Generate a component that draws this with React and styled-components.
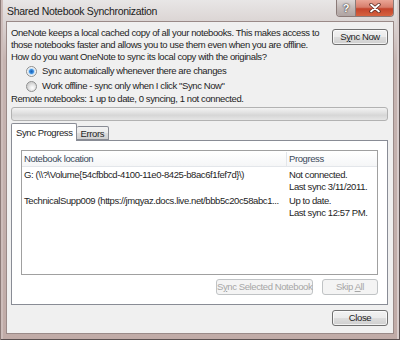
import React from 'react';
import styled, { createGlobalStyle } from 'styled-components';

const GlobalStyle = createGlobalStyle`
	html, body {
		margin: 0;
		padding: 0;
		background: #ffffff;
	}
	body {
		width: 400px;
		height: 340px;
		overflow: hidden;
		font-family: 'Liberation Sans', Arial, sans-serif;
	}
`;

const rows = [
	{
		location: 'G: (\\\\?\\Volume{54cfbbcd-4100-11e0-8425-b8ac6f1fef7d}\\)',
		status: 'Not connected.',
		last: 'Last sync 3/11/2011.',
	},
	{
		location:
			'TechnicalSupp009 (https://jmqyaz.docs.live.net/bbb5c20c58abc1...',
		status: 'Up to date.',
		last: 'Last sync 12:57 PM.',
	},
];

const App = () => {
	return (
		<>
			<GlobalStyle />
			<Window>
				<TitleBar>
					<Title>Shared Notebook Synchronization</Title>
					<CaptionButtons>
						<HelpButton>?</HelpButton>
						<CloseCaption>
							<svg width='12' height='10' viewBox='0 0 12 10'>
								<path
									d='M2 1.5 L10 8.5 M10 1.5 L2 8.5'
									stroke='#5a2a22'
									strokeWidth='3.4'
									strokeLinecap='round'
								/>
								<path
									d='M2 1.5 L10 8.5 M10 1.5 L2 8.5'
									stroke='#ffffff'
									strokeWidth='1.8'
									strokeLinecap='round'
								/>
							</svg>
						</CloseCaption>
					</CaptionButtons>
				</TitleBar>
				<Client>
					<TopRow>
						<Intro>
							OneNote keeps a local cached copy of all your notebooks. This
							makes access to those notebooks faster and allows you to use them
							even when you are offline. How do you want OneNote to sync its
							local copy with the originals?
						</Intro>
						<Button>
							S<u>y</u>nc Now
						</Button>
					</TopRow>
					<RadioGroup>
						<RadioRow>
							<Radio checked />
							<span>Sync automatically whenever there are changes</span>
						</RadioRow>
						<RadioRow>
							<Radio />
							<span>Work offline - sync only when I click "Sync Now"</span>
						</RadioRow>
					</RadioGroup>
					<StatusLine>
						Remote notebooks: 1 up to date, 0 syncing, 1 not connected.
					</StatusLine>
					<ProgressTrack />
					<TabStrip>
						<Tab selected>Sync Progress</Tab>
						<Tab>Errors</Tab>
					</TabStrip>
					<TabPanel>
						<ListBox>
							<ListHeader>
								<HeaderCell>Notebook location</HeaderCell>
								<HeaderCell last>Progress</HeaderCell>
							</ListHeader>
							{rows.map((row, index) => (
								<ListRow key={index}>
									<LocationCell>{row.location}</LocationCell>
									<ProgressCell>
										<div>{row.status}</div>
										<div>{row.last}</div>
									</ProgressCell>
								</ListRow>
							))}
						</ListBox>
						<PanelButtons>
							<Button disabled wide>
								S<u>y</u>nc Selected Notebook
							</Button>
							<Button disabled>
								Skip <u>A</u>ll
							</Button>
						</PanelButtons>
					</TabPanel>
					<Footer>
						<Button>Close</Button>
					</Footer>
				</Client>
			</Window>
		</>
	);
};

const Window = styled.div`
	width: 400px;
	height: 340px;
	box-sizing: border-box;
	display: flex;
	flex-direction: column;
	padding: 0 6px 6px 6px;
	background: linear-gradient(
		to bottom,
		#e8e6e6 0px,
		#dcd6d5 20px,
		#c6b4b1 60px,
		#c0aba7 100%
	);
	box-shadow: inset 1px 0 0 #8c7b78, inset -1px 0 0 #5a5050,
		inset 0 -1px 0 #5a5050, inset -3px 0 0 #d8cccb, inset 3px 0 0 #cdbdba;
`;

const TitleBar = styled.div`
	height: 21px;
	display: flex;
	justify-content: space-between;
	align-items: flex-start;
`;

const Title = styled.div`
	padding: 5px 0 0 1px;
	font-size: 10.5px;
	letter-spacing: -0.3px;
	color: #1c1c1c;
	white-space: nowrap;
`;

const CaptionButtons = styled.div`
	display: flex;
	height: 16px;
	border: 1px solid #8a7a78;
	border-top: none;
	border-radius: 0 0 4px 4px;
	overflow: hidden;
`;

const HelpButton = styled.div`
	width: 18px;
	display: flex;
	align-items: center;
	justify-content: center;
	font-size: 11px;
	font-weight: bold;
	color: #ffffff;
	text-shadow: 0 0 2px #3a3030, 0 0 1px #3a3030;
	background: linear-gradient(to bottom, #dcd6d5, #c2b8b6 50%, #b0a4a2);
	border-right: 1px solid #8a7a78;
`;

const CloseCaption = styled.div`
	width: 37px;
	display: flex;
	align-items: center;
	justify-content: center;
	background: linear-gradient(
		to bottom,
		#eaa596 0%,
		#d77e6c 45%,
		#c4442c 55%,
		#d6623f 100%
	);
`;

const Client = styled.div`
	flex: 1;
	display: flex;
	flex-direction: column;
	background: #f0f0f0;
	border: 1px solid #9a8a88;
	padding: 5px 5px 0 4px;
	font-size: 9.5px;
	letter-spacing: -0.4px;
	line-height: 12px;
	color: #1e1e1e;
`;

const TopRow = styled.div`
	display: flex;
	justify-content: space-between;
	align-items: flex-start;
`;

const Intro = styled.p`
	margin: 0;
	width: 310px;
`;

const Button = styled.button`
	width: ${(props) => (props.wide ? '97px' : '56px')};
	height: 16px;
	padding: 0;
	margin-top: 2px;
	font-family: inherit;
	font-size: 9.5px;
	letter-spacing: -0.4px;
	line-height: 12px;
	color: ${(props) => (props.disabled ? '#a6a6a6' : '#1e1e1e')};
	border: 1px solid ${(props) => (props.disabled ? '#c0c3c5' : '#707070')};
	border-radius: 3px;
	background: ${(props) =>
		props.disabled
			? '#f4f4f4'
			: 'linear-gradient(to bottom, #f2f2f2 0%, #ebebeb 50%, #dddddd 51%, #cfcfcf 100%)'};
	box-shadow: inset 0 0 0 1px
		${(props) => (props.disabled ? '#f4f4f4' : 'rgba(255,255,255,0.7)')};
	white-space: nowrap;

	u {
		text-decoration-thickness: 1px;
		text-underline-offset: 1px;
	}
`;

const RadioGroup = styled.div`
	display: flex;
	flex-direction: column;
	gap: 1px;
	margin: 1px 0 0 15px;
`;

const RadioRow = styled.label`
	height: 14px;
	display: flex;
	align-items: center;
	gap: 5px;
`;

const Radio = styled.span`
	width: 9px;
	height: 9px;
	border-radius: 50%;
	border: 1px solid #8e8f8f;
	background: ${(props) =>
		props.checked
			? 'radial-gradient(circle, #1a5fb4 0px, #3a8ee0 2px, #bfdcf5 3px, #f4f4f4 4px)'
			: 'radial-gradient(circle at 60% 65%, #ffffff 0px, #e6e6e6 3px, #d2d2d2 5px)'};
`;

const StatusLine = styled.div`
	margin-top: 0;
`;

const ProgressTrack = styled.div`
	height: 12px;
	margin-top: 2px;
	border: 1px solid #b2b2b2;
	border-radius: 3px;
	background: linear-gradient(
		to bottom,
		#f3f3f3 0%,
		#e1e1e1 40%,
		#d6d6d6 60%,
		#e6e6e6 100%
	);
`;

const TabStrip = styled.div`
	display: flex;
	align-items: flex-end;
	margin-top: 2px;
	height: 17px;
	position: relative;
	z-index: 1;
`;

const Tab = styled.div`
	box-sizing: border-box;
	height: ${(props) => (props.selected ? '18px' : '14px')};
	padding: ${(props) => (props.selected ? '3px 3px 0 4px' : '1px 4px 0 4px')};
	border: 1px solid #898c95;
	border-bottom: ${(props) => (props.selected ? 'none' : '1px solid #898c95')};
	border-left: ${(props) => (props.selected ? '1px solid #898c95' : 'none')};
	border-radius: 2px 2px 0 0;
	background: ${(props) =>
		props.selected
			? '#ffffff'
			: 'linear-gradient(to bottom, #f2f2f2 0%, #ebebeb 50%, #dddddd 51%, #cfcfcf 100%)'};
	margin-bottom: ${(props) => (props.selected ? '-1px' : '0')};
	white-space: nowrap;
`;

const TabPanel = styled.div`
	height: 165px;
	box-sizing: border-box;
	display: flex;
	flex-direction: column;
	background: #ffffff;
	border: 1px solid #898c95;
	padding: 9px 9px 0 9px;
`;

const ListBox = styled.div`
	height: 125px;
	box-sizing: border-box;
	border: 1px solid #a0a0a0;
	padding: 1px 0 0 0;
	overflow: hidden;
`;

const ListHeader = styled.div`
	display: grid;
	grid-template-columns: 265px 1fr;
	height: 14px;
	border-bottom: 1px solid #e3e6ea;
	background: linear-gradient(to bottom, #ffffff, #f5f6f7);
	color: #3c4a5a;
`;

const HeaderCell = styled.div`
	padding: 1px 0 0 2px;
	border-right: ${(props) => (props.last ? 'none' : '1px solid #e3e6ea')};
`;

const ListRow = styled.div`
	display: grid;
	grid-template-columns: 265px 1fr;
	margin-top: 2px;
`;

const LocationCell = styled.div`
	padding-left: 2px;
	white-space: nowrap;
	overflow: hidden;
`;

const ProgressCell = styled.div`
	padding-left: 2px;
	white-space: nowrap;
`;

const PanelButtons = styled.div`
	display: flex;
	justify-content: flex-end;
	gap: 9px;
	margin-top: 2px;
`;

const Footer = styled.div`
	display: flex;
	justify-content: flex-end;
	margin-top: 3px;
`;

export default App;
